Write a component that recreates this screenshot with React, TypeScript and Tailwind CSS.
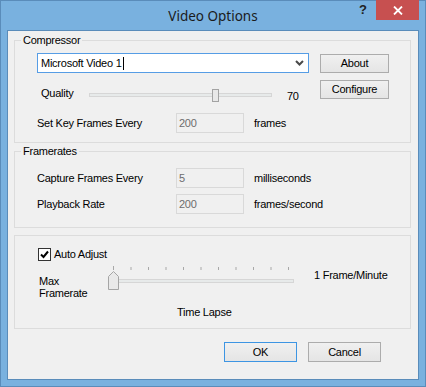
import React from "react";

function Btn({ label, primary = false, w = "w-[69px]", h = "h-[19px]", cls = "" }: { label: string; primary?: boolean; w?: string; h?: string; cls?: string }) {
  return (
    <div
      className={`${w} ${h} ${cls} border ${primary ? "border-[#3d95e3]" : "border-[#acacac]"} bg-linear-to-b from-[#f0f0f0] to-[#e5e5e5] flex items-center justify-center`}
    >
      {label}
    </div>
  );
}

function DisabledInput({ value }: { value: string }) {
  return (
    <div className="w-[68px] h-[20px] border border-[#d9d9d9] bg-[#f0f0f0] text-[#6d6d6d] flex items-center pl-[2px]">
      {value}
    </div>
  );
}

export default function App() {
  const ticks = Array.from({ length: 11 }, (_, i) => 7.5 + i * 17.5);
  return (
    <div className="w-[426px] h-[387px] bg-[#79b1df] border border-[#5a8cba] flex flex-col font-['Liberation_Sans',Arial,sans-serif] text-[11px] leading-[13px] tracking-[-0.25px] text-black select-none">
      {/* Title bar */}
      <div className="relative h-[29px] shrink-0 flex items-center justify-center">
        <span className="font-['Noto_Sans',sans-serif] text-[13.5px] leading-[18px] tracking-normal text-[#1b1b1b]">
          Video Options
        </span>
        <div className="absolute right-[6px] top-[-1px] flex items-start">
          <span className="mr-[9px] mt-[3px] font-bold text-[13px] leading-[13px] tracking-normal text-[#222]">?</span>
          <div className="w-[43px] h-[20px] bg-[#c75050] flex items-center justify-center">
            <svg width="10" height="9" viewBox="0 0 10 9">
              <path d="M1 0.5 L9 8.5 M9 0.5 L1 8.5" stroke="#ffffff" strokeWidth="1.8" fill="none" />
            </svg>
          </div>
        </div>
      </div>

      {/* Client area */}
      <div className="mx-[6px] mb-[6px] flex-1 border border-[#5a8cba] bg-[#f0f0f0] flex flex-col">
        {/* Compressor */}
        <fieldset className="mt-[3px] ml-[6px] mr-[7px] border border-[#dcdcdc] pb-[9px]">
          <legend className="ml-[6px] px-[2px] leading-[13px]">Compressor</legend>
          <div className="pt-[6px] pl-[22px] flex">
            <div className="flex flex-col w-[272px]">
              <div className="h-[20px] border border-[#569de5] bg-white flex items-center pl-[3px] pr-[4px]">
                <span>Microsoft Video 1</span>
                <span className="w-[1px] h-[13px] bg-black ml-[1px]" />
                <div className="flex-1" />
                <svg width="9" height="6" viewBox="0 0 9 6">
                  <path d="M1 1 L4.5 4.5 L8 1" stroke="#4a4a4a" strokeWidth="2" fill="none" />
                </svg>
              </div>
              <div className="mt-[14px] h-[16px] flex items-start">
                <div className="w-[52px] pl-[4px]">Quality</div>
                <svg width="183" height="14" viewBox="0 0 183 14" className="mt-[2px]">
                  <rect x="0.5" y="4.5" width="182" height="3" fill="#e7eaea" stroke="#d6d6d6" />
                  <rect x="123.5" y="0.5" width="6" height="12" fill="#e8e8e8" stroke="#a3a3a3" />
                </svg>
                <div className="ml-[15px] mt-[3px]">70</div>
              </div>
              <div className="mt-[10px] h-[20px] flex items-center">
                <div className="w-[139px]">Set Key Frames Every</div>
                <DisabledInput value="200" />
                <div className="ml-[10px] whitespace-nowrap">frames</div>
              </div>
            </div>
            <div className="ml-[11px] flex flex-col">
              <Btn label="About" cls="mt-[1px]" />
              <Btn label="Configure" cls="mt-[7px]" />
            </div>
          </div>
        </fieldset>

        {/* Framerates */}
        <fieldset className="mt-[2px] ml-[6px] mr-[7px] border border-[#dcdcdc] pb-[13px]">
          <legend className="ml-[6px] px-[2px] leading-[13px]">Framerates</legend>
          <div className="pt-[10px] pl-[22px] flex flex-col">
            <div className="h-[20px] flex items-center">
              <div className="w-[139px]">Capture Frames Every</div>
              <DisabledInput value="5" />
              <div className="ml-[10px]">milliseconds</div>
            </div>
            <div className="mt-[6px] h-[20px] flex items-center">
              <div className="w-[139px]">Playback Rate</div>
              <DisabledInput value="200" />
              <div className="ml-[10px]">frames/second</div>
            </div>
          </div>
        </fieldset>

        {/* Auto adjust */}
        <div className="mt-[7px] ml-[6px] mr-[7px] border border-[#dcdcdc] pt-[12px] pb-[9px] flex flex-col">
          <div className="h-[13px] pl-[23px] flex items-center">
            <div className="w-[13px] h-[13px] border border-[#333333] bg-white flex items-center justify-center">
              <svg width="11" height="11" viewBox="0 0 11 11">
                <path d="M2 5.5 L4.5 8 L9 2.5" stroke="#000" strokeWidth="2" fill="none" />
              </svg>
            </div>
            <span className="ml-[3px]">Auto Adjust</span>
          </div>
          <div className="mt-[4px] pl-[24px] flex items-start">
            <div className="w-[67px] mt-[10px] leading-[12px]">
              <div>Max</div>
              <div>Framerate</div>
            </div>
            <svg width="190" height="26" viewBox="0 0 190 26">
              {ticks.map((x, i) => (
                <line key={i} x1={x} x2={x} y1={i === 0 ? 1 : 2} y2={5} stroke="#a8a8a8" strokeWidth="1" />
              ))}
              <rect x="5.5" y="14.5" width="182" height="3" fill="#e7eaea" stroke="#d6d6d6" />
              <path d="M2.5 11.5 L7.5 6.5 L12.5 11.5 V24.5 H2.5 Z" fill="#e9e9e9" stroke="#a5a5a5" />
            </svg>
            <div className="ml-[18px] mt-[4px] whitespace-nowrap">1 Frame/Minute</div>
          </div>
          <div className="mt-[7px] ml-[162px]">Time Lapse</div>
        </div>

        {/* Buttons */}
        <div className="mt-[13px] pr-[37px] flex justify-end gap-[11px]">
          <Btn label="OK" primary w="w-[73px]" h="h-[20px]" />
          <Btn label="Cancel" w="w-[73px]" h="h-[20px]" />
        </div>
      </div>
    </div>
  );
}
